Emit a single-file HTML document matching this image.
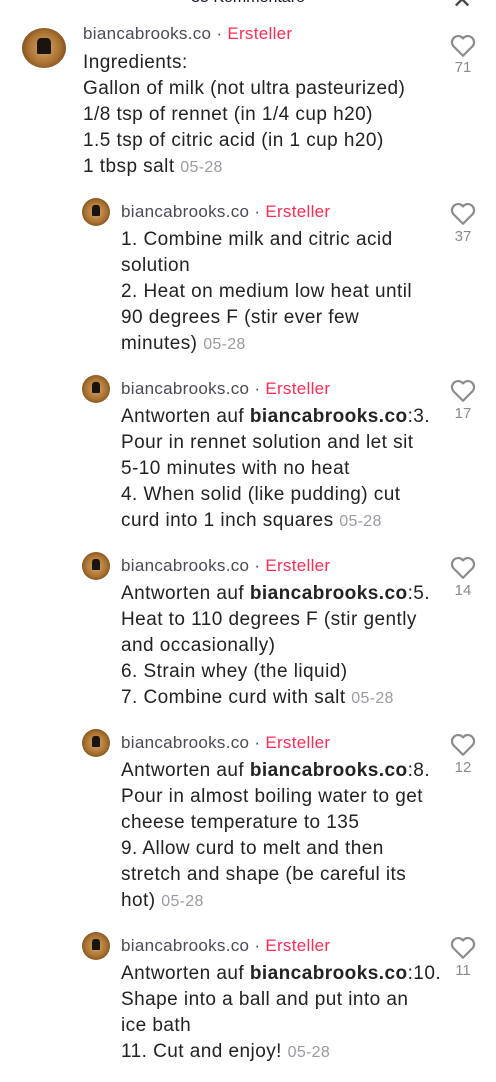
<!DOCTYPE html>
<html><head><meta charset="utf-8"><style>
body{margin:0;width:496px;height:1082px;background:#fff;position:relative;overflow:hidden;font-family:"Liberation Sans",sans-serif;color:#161823}
.a{position:absolute}
.av{position:absolute;border-radius:50%;background:radial-gradient(circle,#d8a86a 0%,#a8702e 55%,#4a2810 100%);overflow:hidden}
.av:after{content:"";position:absolute;left:35%;top:25%;width:30%;height:40%;background:#1a1410;border-radius:30% 30% 10% 10%}
.u{position:absolute;font-size:17px;letter-spacing:0.3px;color:#4a4b54;white-space:nowrap}
.u b{color:#fe2c55;font-weight:normal}
.t{position:absolute;font-size:19px;letter-spacing:0.45px;line-height:26px;color:#222;white-space:nowrap}
.d{color:#9a9ba1;font-size:16px;letter-spacing:0.3px}
.n{position:absolute;font-size:15px;color:#8a8b91;width:30px;text-align:center}
.h{position:absolute}
strong{font-weight:600}
</style></head><body>
<div class="a" style="left:0;width:496px;top:-11px;text-align:center;font-size:16px">35 Kommentare</div>
<div class="a" style="left:452px;top:-14px;font-size:24px;color:#444">✕</div>

<div class="av" style="left:22px;top:28px;width:44px;height:40px"></div>
<div class="u" style="left:83px;top:24px">biancabrooks.co · <b>Ersteller</b></div>
<div class="t" style="left:83px;top:50px">Ingredients:<br>Gallon of milk (not ultra pasteurized)<br>1/8 tsp of rennet (in 1/4 cup h20)<br>1.5 tsp of citric acid (in 1 cup h20)<br>1 tbsp salt <span class="d">05-28</span></div>
<svg class="h" style="left:450px;top:34px" width="26" height="24" viewBox="0 0 24 22"><path d="M12 20 L3 11 A5 5 0 0 1 12 4 A5 5 0 0 1 21 11 Z" fill="none" stroke="#8a8b91" stroke-width="2" stroke-linejoin="round"/></svg>
<div class="n" style="left:448px;top:59px">71</div>

<div class="av" style="left:82px;top:198px;width:28px;height:28px"></div>
<div class="u" style="left:121px;top:202px">biancabrooks.co · <b>Ersteller</b></div>
<div class="t" style="left:121px;top:227px">1. Combine milk and citric acid<br>solution<br>2. Heat on medium low heat until<br>90 degrees F (stir ever few<br>minutes) <span class="d">05-28</span></div>
<svg class="h" style="left:450px;top:202px" width="26" height="24" viewBox="0 0 24 22"><path d="M12 20 L3 11 A5 5 0 0 1 12 4 A5 5 0 0 1 21 11 Z" fill="none" stroke="#8a8b91" stroke-width="2" stroke-linejoin="round"/></svg>
<div class="n" style="left:448px;top:228px">37</div>

<div class="av" style="left:82px;top:375px;width:28px;height:28px"></div>
<div class="u" style="left:121px;top:379px">biancabrooks.co · <b>Ersteller</b></div>
<div class="t" style="left:121px;top:404px">Antworten auf <strong>biancabrooks.co</strong>:3.<br>Pour in rennet solution and let sit<br>5-10 minutes with no heat<br>4. When solid (like pudding) cut<br>curd into 1 inch squares <span class="d">05-28</span></div>
<svg class="h" style="left:450px;top:379px" width="26" height="24" viewBox="0 0 24 22"><path d="M12 20 L3 11 A5 5 0 0 1 12 4 A5 5 0 0 1 21 11 Z" fill="none" stroke="#8a8b91" stroke-width="2" stroke-linejoin="round"/></svg>
<div class="n" style="left:448px;top:405px">17</div>

<div class="av" style="left:82px;top:552px;width:28px;height:28px"></div>
<div class="u" style="left:121px;top:556px">biancabrooks.co · <b>Ersteller</b></div>
<div class="t" style="left:121px;top:581px">Antworten auf <strong>biancabrooks.co</strong>:5.<br>Heat to 110 degrees F (stir gently<br>and occasionally)<br>6. Strain whey (the liquid)<br>7. Combine curd with salt <span class="d">05-28</span></div>
<svg class="h" style="left:450px;top:556px" width="26" height="24" viewBox="0 0 24 22"><path d="M12 20 L3 11 A5 5 0 0 1 12 4 A5 5 0 0 1 21 11 Z" fill="none" stroke="#8a8b91" stroke-width="2" stroke-linejoin="round"/></svg>
<div class="n" style="left:448px;top:582px">14</div>

<div class="av" style="left:82px;top:729px;width:28px;height:28px"></div>
<div class="u" style="left:121px;top:733px">biancabrooks.co · <b>Ersteller</b></div>
<div class="t" style="left:121px;top:758px">Antworten auf <strong>biancabrooks.co</strong>:8.<br>Pour in almost boiling water to get<br>cheese temperature to 135<br>9. Allow curd to melt and then<br>stretch and shape (be careful its<br>hot) <span class="d">05-28</span></div>
<svg class="h" style="left:450px;top:733px" width="26" height="24" viewBox="0 0 24 22"><path d="M12 20 L3 11 A5 5 0 0 1 12 4 A5 5 0 0 1 21 11 Z" fill="none" stroke="#8a8b91" stroke-width="2" stroke-linejoin="round"/></svg>
<div class="n" style="left:448px;top:759px">12</div>

<div class="av" style="left:82px;top:932px;width:28px;height:28px"></div>
<div class="u" style="left:121px;top:936px">biancabrooks.co · <b>Ersteller</b></div>
<div class="t" style="left:121px;top:961px">Antworten auf <strong>biancabrooks.co</strong>:10.<br>Shape into a ball and put into an<br>ice bath<br>11. Cut and enjoy! <span class="d">05-28</span></div>
<svg class="h" style="left:450px;top:936px" width="26" height="24" viewBox="0 0 24 22"><path d="M12 20 L3 11 A5 5 0 0 1 12 4 A5 5 0 0 1 21 11 Z" fill="none" stroke="#8a8b91" stroke-width="2" stroke-linejoin="round"/></svg>
<div class="n" style="left:448px;top:962px">11</div>
</body></html>
